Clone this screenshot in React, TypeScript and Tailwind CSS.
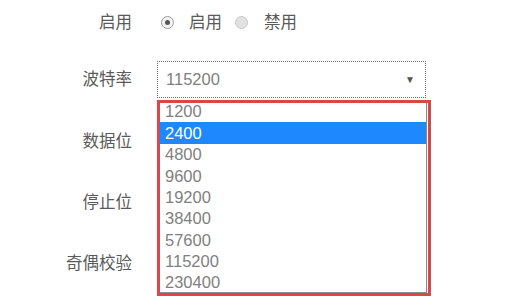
import React from "react";

const baudRates = ["1200", "2400", "4800", "9600", "19200", "38400", "57600", "115200", "230400"];

function Radio({ checked }: { checked?: boolean }) {
  return (
    <span
      className={`flex h-[13px] w-[13px] items-center justify-center rounded-full border ${
        checked ? "border-[#9a9a9a] bg-[#f4f4f4]" : "border-[#c8c8c8] bg-[#e2e2e2]"
      }`}
    >
      {checked && <span className="h-[5px] w-[5px] rounded-full bg-[#555]" />}
    </span>
  );
}

function Row({ label, className, children }: { label: string; className?: string; children?: React.ReactNode }) {
  return (
    <div className={`flex items-center ${className ?? ""}`}>
      <div className="w-[132px] shrink-0 text-right text-[16.5px] text-[#5a5a5a]">{label}</div>
      <div className="ml-[25px] flex h-full items-center">{children}</div>
    </div>
  );
}

function SelectBox({ value, focused }: { value?: string; focused?: boolean }) {
  return (
    <div
      className={`flex h-[37px] w-[269px] items-center justify-between bg-white pl-[8px] pr-[10px] text-[16.5px] text-[#808080] ${
        focused ? "border border-dotted border-[#777]" : "border border-[#ccc]"
      }`}
    >
      <span>{value}</span>
      <span className="text-[10px] leading-none text-[#555]">▼</span>
    </div>
  );
}

export default function App() {
  const selected = "2400";
  return (
    <div
      className="relative h-[307px] w-[532px] overflow-hidden bg-white"
      style={{ fontFamily: '"Liberation Sans", "Noto Sans CJK SC", sans-serif' }}
    >
      <Row label="启用" className="h-[44px]">
        <div className="flex items-center text-[16.5px] text-[#5a5a5a]">
          <span className="ml-[4px]"><Radio checked /></span>
          <span className="ml-[15px]">启用</span>
          <span className="ml-[13px]"><Radio /></span>
          <span className="ml-[16px]">禁用</span>
        </div>
      </Row>
      <Row label="波特率" className="mt-[17px] h-[37px]">
        <SelectBox value="115200" focused />
      </Row>
      {/* these selects sit under the open option list */}
      <Row label="数据位" className="mt-[25px] h-[37px]">
        <SelectBox />
      </Row>
      <Row label="停止位" className="mt-[24px] h-[37px]">
        <SelectBox />
      </Row>
      <Row label="奇偶校验" className="mt-[24px] h-[37px]">
        <SelectBox />
      </Row>

      {/* native option list */}
      <div className="absolute left-[157px] top-[101px] h-[192px] w-[270px] overflow-hidden border-b border-r border-[#8a8a8a] bg-white">
        {baudRates.map((rate) => (
          <div
            key={rate}
            className={`flex h-[21.4px] items-center pl-[8px] text-[16.5px] ${
              rate === selected ? "bg-[#1e88ff] text-white" : "text-[#808080]"
            }`}
          >
            {rate}
          </div>
        ))}
      </div>

      {/* red highlight frame */}
      <div className="pointer-events-none absolute left-[157px] top-[100px] h-[196px] w-[274px] border-[3px] border-[#d9474b]" />
    </div>
  );
}
